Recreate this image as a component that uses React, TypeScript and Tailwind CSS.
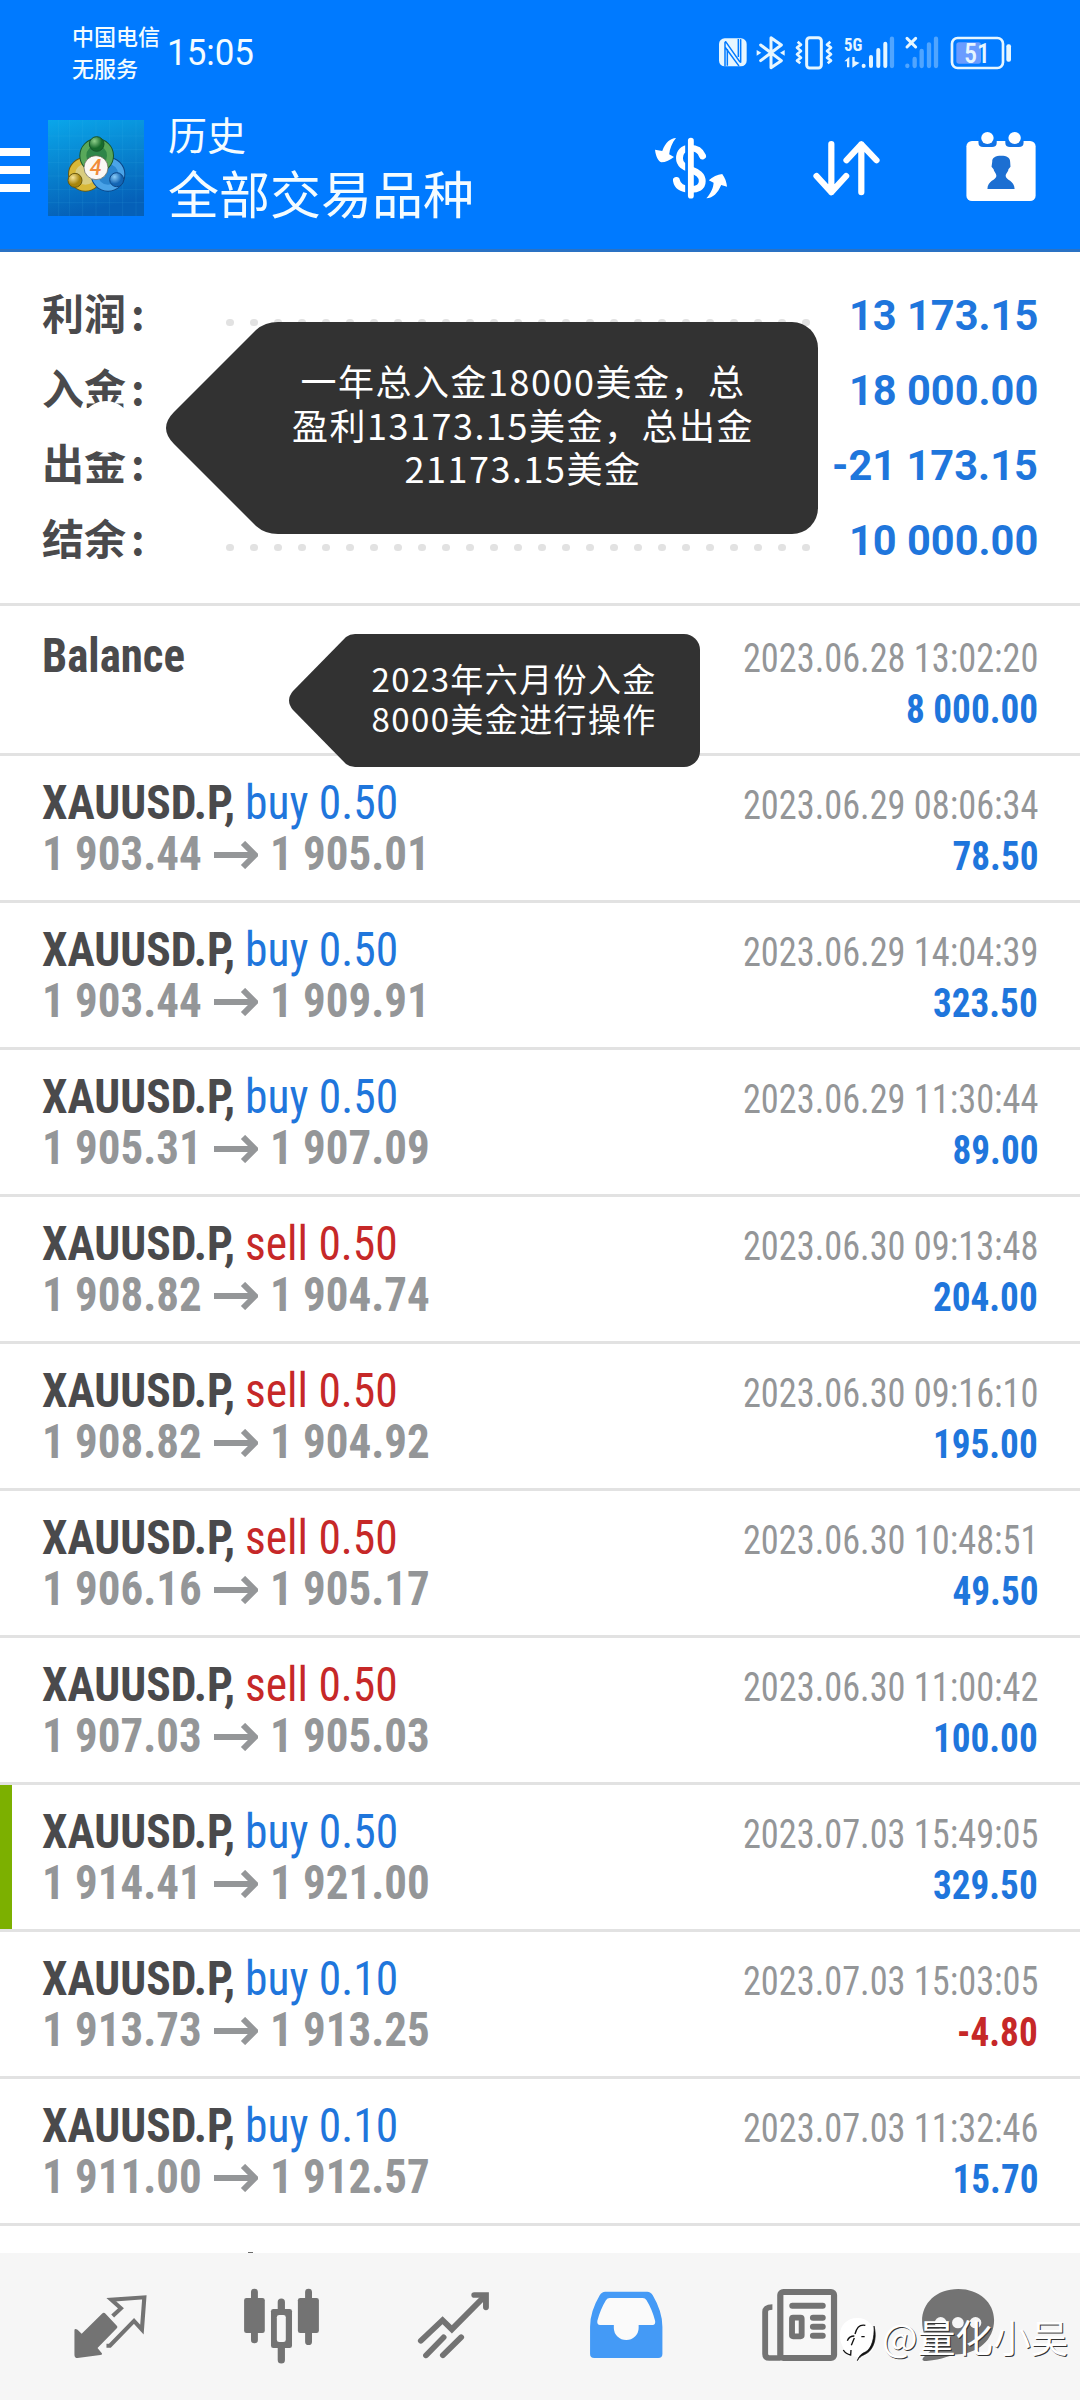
import type { ReactNode } from "react";

type Trade = {
  side: "buy" | "sell";
  volume: string;
  open: string;
  close: string;
  time: string;
  profit: string;
  loss?: boolean;
  marked?: boolean;
};

const trades: Trade[] = [
  { side: "buy", volume: "0.50", open: "1 903.44", close: "1 905.01", time: "2023.06.29 08:06:34", profit: "78.50" },
  { side: "buy", volume: "0.50", open: "1 903.44", close: "1 909.91", time: "2023.06.29 14:04:39", profit: "323.50" },
  { side: "buy", volume: "0.50", open: "1 905.31", close: "1 907.09", time: "2023.06.29 11:30:44", profit: "89.00" },
  { side: "sell", volume: "0.50", open: "1 908.82", close: "1 904.74", time: "2023.06.30 09:13:48", profit: "204.00" },
  { side: "sell", volume: "0.50", open: "1 908.82", close: "1 904.92", time: "2023.06.30 09:16:10", profit: "195.00" },
  { side: "sell", volume: "0.50", open: "1 906.16", close: "1 905.17", time: "2023.06.30 10:48:51", profit: "49.50" },
  { side: "sell", volume: "0.50", open: "1 907.03", close: "1 905.03", time: "2023.06.30 11:00:42", profit: "100.00" },
  { side: "buy", volume: "0.50", open: "1 914.41", close: "1 921.00", time: "2023.07.03 15:49:05", profit: "329.50", marked: true },
  { side: "buy", volume: "0.10", open: "1 913.73", close: "1 913.25", time: "2023.07.03 15:03:05", profit: "-4.80", loss: true },
  { side: "buy", volume: "0.10", open: "1 911.00", close: "1 912.57", time: "2023.07.03 11:32:46", profit: "15.70" },
];

const summary = [
  { label: "利润", value: "13 173.15" },
  { label: "入金", value: "18 000.00" },
  { label: "出金", value: "-21 173.15" },
  { label: "结余", value: "10 000.00" },
];

function Glyph({ box, w, h, className, children }: { box: string; w: number; h: number; className?: string; children: ReactNode }) {
  return (
    <svg viewBox={box} width={w} height={h} preserveAspectRatio="none" fill="none" className={"block shrink-0 " + (className ?? "")}>
      {children}
    </svg>
  );
}

function StatusIcons() {
  const c = "#e6f6ff";
  return (
    <div className="flex">
      <Glyph box="16 26 108 108" w={36} h={36}>
        <rect x="25" y="36" width="83" height="84" rx="17" fill={c} />
        <path d="M43 118V48M45 46L87 106M90 40V108M43 62L84 118" stroke="#007aff" strokeWidth="4.5" strokeLinecap="round" />
        <path d="M50 68V118M83 38V92" stroke="#007aff" strokeWidth="4.5" />
      </Glyph>
      <Glyph box="124 26 116 108" w={38.7} h={36}>
        <path d="M150 56L212 103L181 124V34L212 56L150 103" stroke={c} strokeWidth="9" strokeLinejoin="round" strokeLinecap="round" />
        <path d="M138 71L152 79L138 88ZM222 71L208 79L222 88Z" fill={c} />
      </Glyph>
      <Glyph box="240 26 144 108" w={48} h={36}>
        <rect x="287" y="34" width="44" height="91" rx="9" stroke={c} strokeWidth="9" />
        <path d="M260 46L270 55L258 64L270 74L258 84L270 94L258 103L268 111M358 46L348 55L360 64L348 74L360 84L348 94L360 103L350 111" stroke={c} strokeWidth="8" strokeLinejoin="round" />
      </Glyph>
      <Glyph box="384 26 184 108" w={61.3} h={36}>
        <text x="399" y="73" fill={c} fontSize="55" fontWeight="700" textLength="55" lengthAdjust="spacingAndGlyphs" fontFamily="'Roboto Condensed'">5G</text>
        <path d="M400 105L415 91V123H408V105ZM424 92H431V105L446 109L424 124Z" fill={c} />
        <path d="M458 119V118M480 119V92M502 119V71M523 119V52" stroke={c} strokeWidth="12" strokeLinecap="round" />
        <path d="M543 119V37" stroke={c} strokeOpacity=".35" strokeWidth="13" strokeLinecap="round" />
      </Glyph>
      <Glyph box="568 26 132 108" w={44} h={36}>
        <path d="M589 36L615 62M615 36L589 62" stroke={c} strokeWidth="9" strokeLinecap="round" />
        <path d="M590 119V118M612 119V98M633 119V74M655 119V54M676 119V37" stroke={c} strokeOpacity=".35" strokeWidth="13" strokeLinecap="round" />
      </Glyph>
      <Glyph box="700 26 210 108" w={70} h={36}>
        <rect x="724" y="35" width="153" height="90" rx="17" stroke={c} strokeWidth="8" />
        <rect x="737" y="48" width="74" height="64" rx="8" fill="#6a9cff" />
        <rect x="887" y="54" width="14" height="52" rx="6" fill={c} />
        <text x="760" y="109" fill={c} fontSize="82" fontWeight="500" textLength="78" lengthAdjust="spacingAndGlyphs" fontFamily="'Roboto Condensed'">51</text>
      </Glyph>
    </div>
  );
}

function AppIcon() {
  return (
    <svg viewBox="24 24 288 288" width="96" height="96" className="ml-[18px] block shrink-0">
      <defs>
        <linearGradient id="bg" x1="0" y1="0" x2=".25" y2="1">
          <stop offset="0" stopColor="#0aa6ea" />
          <stop offset=".5" stopColor="#0884d0" />
          <stop offset="1" stopColor="#0560b8" />
        </linearGradient>
        <radialGradient id="gr" cx=".35" cy=".3"><stop offset="0" stopColor="#8fd08a" /><stop offset="1" stopColor="#176b2c" /></radialGradient>
        <radialGradient id="ye" cx=".35" cy=".3"><stop offset="0" stopColor="#f6e59a" /><stop offset="1" stopColor="#a8850c" /></radialGradient>
        <radialGradient id="bl" cx=".35" cy=".3"><stop offset="0" stopColor="#8ccdf8" /><stop offset="1" stopColor="#1365b4" /></radialGradient>
      </defs>
      <rect x="24" y="24" width="288" height="288" fill="url(#bg)" />
      <path d="M56 24V312M88 24V312M128 24V312M168 24V312M208 24V312M248 24V312M288 24V312M24 72H312M24 112H312M24 152H312M24 192H312M24 232H312M24 272H312" stroke="#4cc0ee" strokeOpacity=".18" strokeWidth="2" />
      <circle cx="136" cy="187" r="40" stroke="#6c5a0c" strokeWidth="24" fill="none" />
      <circle cx="136" cy="187" r="40" stroke="#d8b838" strokeWidth="18" fill="#d9cd80" />
      <circle cx="204" cy="187" r="40" stroke="#0c4687" strokeWidth="24" fill="none" />
      <circle cx="204" cy="187" r="40" stroke="#4ba4e8" strokeWidth="18" fill="#2b86d0" />
      <circle cx="170" cy="131" r="40" stroke="#17552a" strokeWidth="24" fill="none" />
      <circle cx="170" cy="131" r="40" stroke="#58a85a" strokeWidth="18" fill="#2f8548" />
      <circle cx="170" cy="96" r="22" fill="url(#gr)" stroke="#17552a" strokeWidth="3" />
      <circle cx="105" cy="205" r="21" fill="url(#ye)" stroke="#6c5a0c" strokeWidth="3" />
      <circle cx="230" cy="203" r="21" fill="url(#bl)" stroke="#0c4687" strokeWidth="3" />
      <circle cx="168" cy="167" r="36" fill="#fbf8f4" stroke="#5b5a4a" strokeWidth="2" />
      <text x="149" y="190" fontSize="64" fontWeight="500" fill="#f08c3a" fontFamily="Roboto" fontStyle="italic">4</text>
    </svg>
  );
}

function Header() {
  return (
    <header className="h-[252px] shrink-0 border-b-[3px] border-[#2a72c4] bg-[#007aff] text-[#f4fcff]">
      <div className="flex h-[105px] items-center pl-[72px] pr-[66px]">
        <div className="mb-[4px] w-[95px] whitespace-nowrap font-['Noto_Sans_CJK_SC',sans-serif] text-[22px] font-medium leading-[32px]">
          <div>中国电信</div>
          <div>无服务</div>
        </div>
        <div className="origin-left scale-x-[0.97] font-[Roboto,sans-serif] text-[36px] font-[450]">15:05</div>
        <div className="ml-auto">
          <StatusIcons />
        </div>
      </div>
      <div className="flex h-[126px] items-center pr-[42px]">
        <div className="mt-1 flex w-[30px] flex-col gap-[10px]">
          <span className="h-2 bg-white" />
          <span className="h-2 bg-white" />
          <span className="h-2 bg-white" />
        </div>
        <AppIcon />
        <div className="ml-6 whitespace-nowrap font-['Noto_Sans_CJK_SC',sans-serif]">
          <div className="text-[39px] leading-[48px]">历史</div>
          <div className="text-[51px] leading-[70px]">全部交易品种</div>
        </div>
        <div className="ml-auto flex items-center gap-[82px]">
          <Glyph box="328 404 220 200" w={75.8} h={66.7}>
            <path d="M469 467C462 448 450 443 432 443C412 443 402 456 402 474C402 492 415 500 435 508C455 516 468 524 468 543C468 560 455 568 432 567C410 566 396 558 393 540" stroke="#fff" strokeWidth="20" strokeLinecap="round" />
            <path d="M423 420V590" stroke="#007aff" strokeWidth="9" />
            <path d="M435 421V586" stroke="#fff" strokeWidth="17" strokeLinecap="round" />
            <path d="M392 413C375 414 362 425 352 452L331 448C333 468 340 482 349 486C362 486 375 479 386 470L372 462C374 445 380 428 392 413ZM480 594C495 575 500 562 501 547L487 540C498 530 512 522 526 521C534 532 539 546 540 559L523 554C512 580 500 592 480 594Z" fill="#fff" />
          </Glyph>
          <Glyph box="786 404 206 200" w={71} h={66.7}>
            <path d="M845 431V576M802 527L845 576L888 527M932 576V432M889 480L932 432L976 480" stroke="#fff" strokeWidth="18" strokeLinecap="round" strokeLinejoin="round" />
          </Glyph>
          <Glyph box="1230 390 214 228" w={73.7} h={76}>
            <rect x="1237" y="423" width="201" height="180" rx="16" fill="#fff" />
            <path d="M1272 420H1325V428Q1325 441 1311 441H1286Q1272 441 1272 428ZM1350 420H1403V428Q1403 441 1389 441H1364Q1350 441 1350 428Z" fill="#1273e6" />
            <rect x="1268" y="390" width="140" height="33" fill="#007aff" />
            <circle cx="1298" cy="414" r="18" fill="#fff" />
            <circle cx="1377" cy="414" r="18" fill="#fff" />
            <path d="M1338 467C1322 467 1311 472 1312 485L1310 500L1316 508C1318 518 1324 520 1324 528C1324 540 1298 542 1298 567H1377C1377 542 1351 540 1351 528C1351 520 1358 518 1359 508L1365 500L1364 485C1364 472 1354 467 1338 467Z" fill="#1c6fd2" />
          </Glyph>
        </div>
      </div>
    </header>
  );
}

function Summary() {
  return (
    <section className="relative h-[354px] shrink-0 border-b-[3px] border-[#e2e2e2] pl-[42px] pr-[42px] pt-[22px]">
      {summary.map((s) => (
        <div key={s.label} className="flex h-[75px] items-center">
          <div className="w-[184px] whitespace-nowrap font-['Noto_Sans_CJK_SC',sans-serif] text-[42px] font-bold text-[#4a4a4c]">
            {s.label}<span className="ml-[5px]">:</span>
          </div>
          <div className="flex w-[584px] justify-between pt-[22px]">
            {Array.from({ length: 25 }, (_, i) => (
              <span key={i} className="size-[7.5px] rounded-full bg-[#e2e2e2]" />
            ))}
          </div>
          <div className="ml-auto origin-right scale-x-[0.99] whitespace-nowrap pt-2 font-[Roboto,sans-serif] text-[42px] font-bold leading-[50px] text-[#1f76dc]">{s.value}</div>
        </div>
      ))}
      <div className="absolute left-[80px] top-[149px] size-[52px] rounded-full bg-white" />
      <div className="absolute left-[166px] top-[70px] h-[212px] w-[652px]">
        <svg viewBox="0 0 652 212" className="absolute inset-0 size-full">
          <path d="M112 0Q99 0 90 8L8 90Q-8 106 8 122L90 204Q99 212 112 212H626A26 26 0 0 0 652 186V26A26 26 0 0 0 626 0Z" fill="#2e2e2e" fillOpacity=".98" />
        </svg>
        <div className="relative pl-[62px] pt-[37px] text-center font-['Noto_Sans_CJK_SC',sans-serif] text-[36px] leading-[43.5px] tracking-[1.5px] whitespace-nowrap text-white">
          <div>一年总入金18000美金，总</div>
          <div>盈利13173.15美金，总出金</div>
          <div>21173.15美金</div>
        </div>
      </div>
    </section>
  );
}

function Stamp({ time, amount, loss }: { time: string; amount: string; loss?: boolean }) {
  return (
    <div className="ml-auto flex flex-col items-end whitespace-nowrap pt-[3px] font-['Roboto_Condensed',Roboto,sans-serif] text-[40px] leading-[51px]">
      <div className="origin-right scale-x-[0.908] font-[450] text-[#949698]">{time}</div>
      <div className={"origin-right scale-x-[0.93] font-bold " + (loss ? "text-[#c62828]" : "text-[#1f76dc]")}>{amount}</div>
    </div>
  );
}

function BalanceRow() {
  return (
    <div className="relative flex h-[150px] shrink-0 border-b-[3px] border-[#e2e2e2] px-[42px] pt-6">
      <div className="origin-left scale-x-[0.935] self-start font-['Roboto_Condensed',Roboto,sans-serif] text-[48px] font-bold leading-[51px] text-[#4a4a4c]">Balance</div>
      <Stamp time="2023.06.28 13:02:20" amount="8 000.00" />
      <div className="absolute left-[289px] top-[27.5px] z-10 h-[133px] w-[411px]">
        <svg viewBox="0 0 411 133" className="absolute inset-0 size-full">
          <path d="M66 0Q61 0 57 3L4 57Q-4 66.5 4 76L57 130Q61 133 66 133H395A16 16 0 0 0 411 117V16A16 16 0 0 0 395 0Z" fill="#323232" />
        </svg>
        <div className="relative pl-[82.5px] pt-[24px] font-['Noto_Sans_CJK_SC',sans-serif] text-[33px] leading-[40px] tracking-[1.4px] whitespace-nowrap text-white">
          <div>2023年六月份入金</div>
          <div>8000美金进行操作</div>
        </div>
      </div>
    </div>
  );
}

function TradeRow({ t }: { t: Trade }) {
  return (
    <div className={"flex h-[147px] shrink-0 border-b-[3px] border-b-[#e2e2e2] pl-[42px] pr-[42px] pt-[21px] " + (t.marked ? "bg-[linear-gradient(90deg,#7cb000_12px,transparent_12px)]" : "")}>
      <div className="whitespace-nowrap font-['Roboto_Condensed',Roboto,sans-serif] text-[48px] leading-[51px]">
        <div className="flex">
          <div className="w-[203px] font-bold text-[#4a4a4c]">
            <span className="inline-block origin-left scale-x-[0.948]">XAUUSD.P,</span>
          </div>
          <div className={"origin-left scale-x-[0.948] font-[450] " + (t.side === "buy" ? "text-[#1f76dc]" : "text-[#c62828]")}>
            {t.side} {t.volume}
          </div>
        </div>
        <div className="flex items-center font-bold text-[#949698]">
          <div className="w-[172px]">
            <span className="inline-block origin-left scale-x-[0.937]">{t.open}</span>
          </div>
          <svg viewBox="0 0 44 28" width="44" height="28" fill="none" className="mt-0.5 block">
            <path d="M0 14H41M29 2L41 14L29 26" stroke="#949698" strokeWidth="6" />
          </svg>
          <span className="ml-3 inline-block origin-left scale-x-[0.937]">{t.close}</span>
        </div>
      </div>
      <Stamp time={t.time} amount={t.profit} loss={t.loss} />
    </div>
  );
}

function BottomNav() {
  const g = "#737373";
  return (
    <nav className="relative flex h-[147px] shrink-0 bg-[#f6f6f6] pt-8">
      <Glyph box="205 195 230 240" w={79.2} h={80} className="ml-[70.6px]">
        <path d="M300 278Q298 278 295 281L236 341L224 329Q215 324 215 331V404Q215 414 224 414L290 405Q298 404 294 399L282 384L338 325Q342 321 338 317L306 282Q303 278 300 278Z" fill={g} />
        <path d="M326 288L350 265L322 239L418 232L411 329L388 303L318 377H308" stroke={g} strokeWidth="12" strokeLinejoin="miter" />
      </Glyph>
      <Glyph box="700 195 235 240" w={81} h={80} className="ml-[91.2px]">
        <path d="M739 216V360M896 216V365" stroke={g} strokeWidth="20" strokeLinecap="round" />
        <path d="M817 246V275M817 380V420" stroke={g} strokeWidth="21" strokeLinecap="round" />
        <rect x="709" y="234" width="60" height="105" rx="7" fill={g} />
        <rect x="865" y="234" width="61" height="105" rx="7" fill={g} />
        <rect x="787" y="267" width="61" height="117" rx="7" fill={g} />
        <rect x="804" y="285" width="26" height="81" rx="7" fill="#f6f6f6" />
      </Glyph>
      <Glyph box="1205 195 225 240" w={77.5} h={80} className="ml-[93px]">
        <path d="M1222 362L1285 301L1312 328L1408 228" stroke={g} strokeWidth="17" strokeLinecap="round" />
        <path d="M1377 225H1411V262" stroke={g} strokeWidth="17" strokeLinecap="round" />
        <path d="M1237 406L1288 352M1286 406L1339 352" stroke={g} strokeWidth="17" strokeLinecap="round" />
      </Glyph>
      <Glyph box="140 195 225 240" w={77.5} h={80} className="ml-[95.8px]">
        <path d="M190 215H312Q322 215 328 226Q356 275 356 320V402Q356 414 344 414H158Q146 414 146 402V320Q146 275 174 226Q180 215 190 215Z" fill="#449af6" />
        <path d="M203 234H299Q306 234 310 241Q326 268 335 303Q336 315 328 315H287V324A36 36 0 0 1 215 324V315H175Q166 315 167 303Q176 268 192 241Q196 234 203 234Z" fill="#fafafa" />
      </Glyph>
      <Glyph box="640 195 230 240" w={79.2} h={80} className="ml-[94.7px]">
        <rect x="699" y="216" width="156" height="198" rx="9" stroke={g} strokeWidth="18" fill="#f8f8f8" />
        <path d="M676 261Q655 261 655 275V402Q655 414 667 414H700" stroke={g} strokeWidth="17" />
        <path d="M734 257H822M794 293H822M794 320H822M794 347H822" stroke={g} strokeWidth="18" strokeLinecap="round" />
        <rect x="733" y="293" width="28" height="56" rx="3" stroke={g} strokeWidth="17" />
      </Glyph>
      <Glyph box="1100 195 225 240" w={77.5} h={80} className="ml-[79.2px]">
        <path d="M1214 207C1275 207 1318 248 1318 300C1318 360 1270 400 1214 403C1190 404 1170 420 1122 423Q1105 423 1112 413C1122 403 1132 396 1140 384C1120 368 1109 335 1109 303C1109 250 1150 207 1214 207Z" fill={g} />
        <circle cx="1163" cy="308" r="17" fill="#f6f6f6" />
        <circle cx="1213" cy="308" r="17" fill="#f6f6f6" />
        <circle cx="1264" cy="308" r="17" fill="#f6f6f6" />
      </Glyph>
      <div className="absolute left-[836px] top-[60px] flex items-center">
        <svg viewBox="18 110 132 144" width="44" height="48" fill="none">
          <path d="M82 122C50 122 30 145 30 172C30 200 44 228 62 234L82 240L82 250C90 250 96 238 100 236C124 232 136 214 136 186C136 146 116 122 82 122Z" fill="#fff" />
          <path d="M132 146C139 172 137 202 118 222C106 234 92 232 82 250C86 236 96 228 106 224C126 214 134 180 132 146Z" fill="#111" stroke="#111" strokeWidth="2" />
          <path d="M106 144C88 140 80 150 75 170M52 190C56 180 64 176 73 176M94 178H104M73 182L64 204M40 218C46 228 52 231 62 233L63 218" stroke="#111" strokeWidth="4" />
        </svg>
        <div className="whitespace-nowrap pl-[2px] font-['Noto_Sans_CJK_SC',sans-serif] text-[37.7px] leading-[46px] mb-1 text-white [text-shadow:1px_1px_0px_#333]">@量化小吴</div>
      </div>
    </nav>
  );
}

export default function App() {
  return (
    <div className="flex h-[2400px] w-[1080px] flex-col overflow-hidden bg-white">
      <Header />
      <Summary />
      <BalanceRow />
      {trades.map((t) => (
        <TradeRow key={t.time} t={t} />
      ))}
      <div className="flex flex-1 items-end pl-[248px]">
        <span className="h-px w-[5px] bg-[#6b6b6b]" />
      </div>
      <BottomNav />
    </div>
  );
}
